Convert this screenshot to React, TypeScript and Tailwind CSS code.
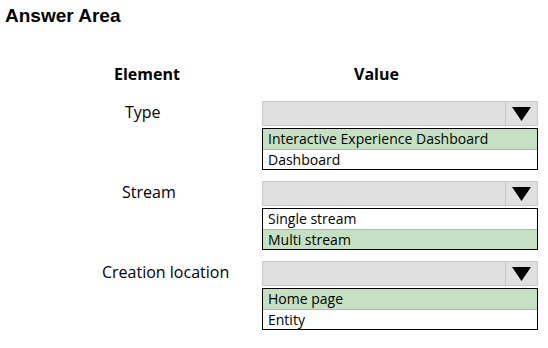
import React from 'react'

type Block = {
  label: string
  labelPad: string
  options: { text: string; picked: boolean }[]
}

const blocks: Block[] = [
  {
    label: 'Type',
    labelPad: 'pl-[125px]',
    options: [
      { text: 'Interactive Experience Dashboard', picked: true },
      { text: 'Dashboard', picked: false },
    ],
  },
  {
    label: 'Stream',
    labelPad: 'pl-[122px]',
    options: [
      { text: 'Single stream', picked: false },
      { text: 'Multi stream', picked: true },
    ],
  },
  {
    label: 'Creation location',
    labelPad: 'pl-[102px]',
    options: [
      { text: 'Home page', picked: true },
      { text: 'Entity', picked: false },
    ],
  },
]

function DropBox() {
  return (
    <div className="flex h-[25px] border border-[#c9c9c9] bg-[#e0e0e0]">
      <div className="flex-1" />
      <div className="flex w-[32px] items-center justify-center border-l border-[#c4c4c4]">
        <svg width="19" height="14" viewBox="0 0 19 14">
          <path d="M0 0 H19 L9.5 14 Z" fill="#000" />
        </svg>
      </div>
    </div>
  )
}

export default function App() {
  return (
    <div className="h-[348px] w-[548px] bg-white text-black" style={{ fontFamily: '"Open Sans", sans-serif' }}>
      {/* Title */}
      <h1 className="pl-[5px] pt-[4px] font-['Liberation_Sans',Arial,sans-serif] text-[19px] font-bold leading-[23px]">
        Answer Area
      </h1>

      {/* Column headers */}
      <div className="mt-[37px] flex text-[16px] font-bold leading-[20px]">
        <div className="w-[262px] pl-[114px]">Element</div>
        <div className="pl-[92px]">Value</div>
      </div>

      {/* Rows */}
      <div className="mt-[17px] flex flex-col gap-[11px]">
        {blocks.map((b) => (
          <div key={b.label} className="flex">
            <div className={`w-[262px] ${b.labelPad} text-[16px] leading-[22px]`}>{b.label}</div>
            <div className="flex w-[276px] flex-col gap-[2px]">
              <DropBox />
              <div className="border border-black bg-white">
                {b.options.map((o, i) => (
                  <div
                    key={o.text}
                    className={`h-[20px] pl-[5px] text-[14px] leading-[20px] ${o.picked ? 'bg-[#c5e0c2]' : 'bg-white'} ${i > 0 ? 'border-t border-[#b5b5b5]' : ''}`}
                  >
                    {o.text}
                  </div>
                ))}
              </div>
            </div>
          </div>
        ))}
      </div>
    </div>
  )
}
